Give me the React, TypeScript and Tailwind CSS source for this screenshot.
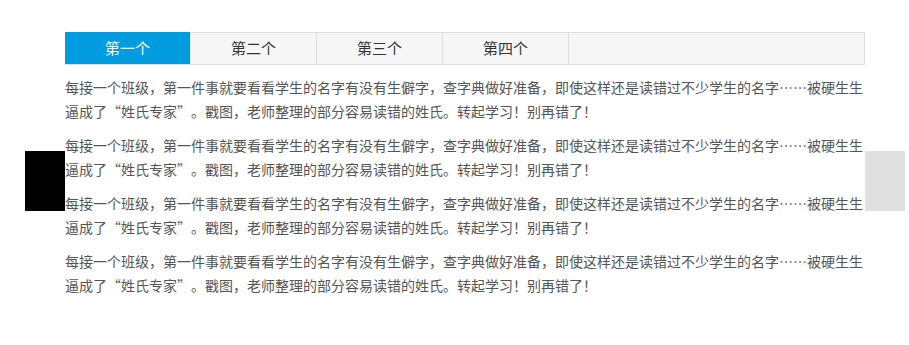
import React from "react";

const text =
  "每接一个班级，第一件事就要看看学生的名字有没有生僻字，查字典做好准备，即使这样还是读错过不少学生的名字……被硬生生逼成了“姓氏专家”。戳图，老师整理的部分容易读错的姓氏。转起学习！别再错了！";

const tabs = ["第一个", "第二个", "第三个", "第四个"];

export default function App() {
  return (
    <div
      lang="zh-CN"
      className="relative w-[909px] h-[345px] bg-white [text-spacing-trim:space-all]"
      style={{ fontFamily: '"Noto Sans CJK SC", "Liberation Sans", sans-serif' }}
    >
      <div className="ml-[65px] pt-[32px] w-[800px]">
        <div className="flex h-[33px] border border-[#dddddd] bg-[#f6f6f6]">
          {tabs.map((t, i) => (
            <div
              key={t}
              className={
                i === 0
                  ? "w-[126px] -ml-px -mt-px h-[32px] flex items-center justify-center bg-[#009ce0] text-white text-[15px] border-r border-[#e8e8e8]"
                  : "w-[126px] h-[31px] flex items-center justify-center text-[#333333] text-[15px] border-r border-[#dddddd]"
              }
            >
              {t}
            </div>
          ))}
        </div>
        <div className="pt-[10px] flex flex-col gap-[10px]">
          {[0, 1, 2, 3].map((i) => (
            <p
              key={i}
              className="text-[14px] leading-[24px] text-[#555555] [text-spacing-trim:space-all] [font-feature-settings:'fwid']"
            >
              {text}
            </p>
          ))}
        </div>
      </div>
      <div className="absolute left-[25px] top-[151px] w-[40px] h-[60px] bg-black" />
      <div className="absolute left-[865px] top-[151px] w-[40px] h-[60px] bg-[#e0e0e0]" />
    </div>
  );
}
